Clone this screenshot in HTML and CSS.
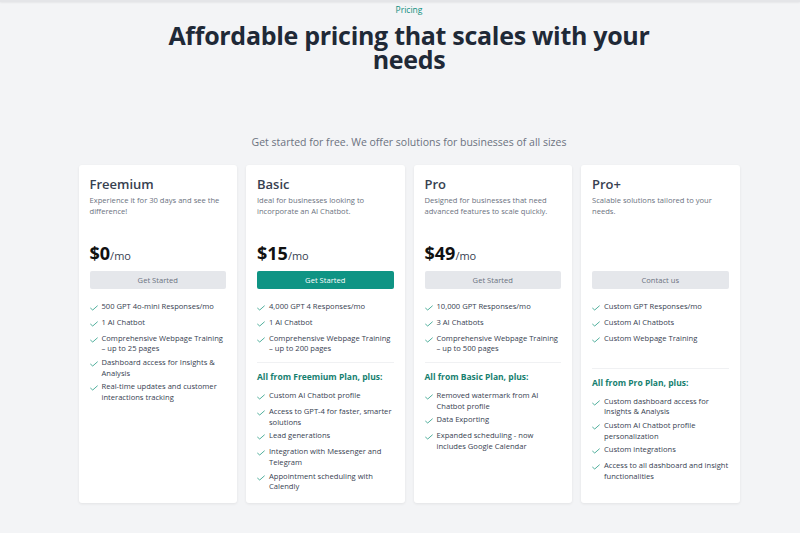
FILE: index.html
```html
<!DOCTYPE html>
<html lang="en">
<head>
<meta charset="utf-8">
<title>Pricing</title>
<link rel="stylesheet" href="styles.css">
</head>
<body>
<div class="topbar"></div>
<main class="page">
  <header class="intro">
    <p class="eyebrow">Pricing</p>
    <h1 class="title"><span class="title-line">Affordable pricing that scales with your</span><span class="title-line">needs</span></h1>
    <p class="subtitle">Get started for free. We offer solutions for businesses of all sizes</p>
  </header>

  <section class="plans">
    <article class="card">
      <div class="head">
        <h2 class="name">Freemium</h2>
        <p class="desc">Experience it for 30 days and see the difference!</p>
      </div>
      <div class="price"><span class="amount">$0</span><span class="per">/mo</span></div>
      <button class="btn">Get Started</button>
      <ul class="features">
        <li><svg class="check" viewBox="0 0 10 7"><path d="M0.8 3.8 L3.4 6 L9.2 0.9"/></svg><span>500 GPT 4o-mini Responses/mo</span></li>
        <li><svg class="check" viewBox="0 0 10 7"><path d="M0.8 3.8 L3.4 6 L9.2 0.9"/></svg><span>1 AI Chatbot</span></li>
        <li><svg class="check" viewBox="0 0 10 7"><path d="M0.8 3.8 L3.4 6 L9.2 0.9"/></svg><span>Comprehensive Webpage Training – up to 25 pages</span></li>
        <li><svg class="check" viewBox="0 0 10 7"><path d="M0.8 3.8 L3.4 6 L9.2 0.9"/></svg><span>Dashboard access for Insights &amp; Analysis</span></li>
        <li><svg class="check" viewBox="0 0 10 7"><path d="M0.8 3.8 L3.4 6 L9.2 0.9"/></svg><span>Real-time updates and customer interactions tracking</span></li>
      </ul>
    </article>

    <article class="card">
      <div class="head">
        <h2 class="name">Basic</h2>
        <p class="desc">Ideal for businesses looking to incorporate an AI Chatbot.</p>
      </div>
      <div class="price"><span class="amount">$15</span><span class="per">/mo</span></div>
      <button class="btn btn-primary">Get Started</button>
      <ul class="features">
        <li><svg class="check" viewBox="0 0 10 7"><path d="M0.8 3.8 L3.4 6 L9.2 0.9"/></svg><span>4,000 GPT 4 Responses/mo</span></li>
        <li><svg class="check" viewBox="0 0 10 7"><path d="M0.8 3.8 L3.4 6 L9.2 0.9"/></svg><span>1 AI Chatbot</span></li>
        <li><svg class="check" viewBox="0 0 10 7"><path d="M0.8 3.8 L3.4 6 L9.2 0.9"/></svg><span>Comprehensive Webpage Training – up to 200 pages</span></li>
      </ul>
      <hr class="divider">
      <h3 class="plus">All from Freemium Plan, plus:</h3>
      <ul class="features extra">
        <li><svg class="check" viewBox="0 0 10 7"><path d="M0.8 3.8 L3.4 6 L9.2 0.9"/></svg><span>Custom AI Chatbot profile</span></li>
        <li><svg class="check" viewBox="0 0 10 7"><path d="M0.8 3.8 L3.4 6 L9.2 0.9"/></svg><span>Access to GPT-4 for faster, smarter solutions</span></li>
        <li><svg class="check" viewBox="0 0 10 7"><path d="M0.8 3.8 L3.4 6 L9.2 0.9"/></svg><span>Lead generations</span></li>
        <li><svg class="check" viewBox="0 0 10 7"><path d="M0.8 3.8 L3.4 6 L9.2 0.9"/></svg><span>Integration with Messenger and Telegram</span></li>
        <li><svg class="check" viewBox="0 0 10 7"><path d="M0.8 3.8 L3.4 6 L9.2 0.9"/></svg><span>Appointment scheduling with Calendly</span></li>
      </ul>
    </article>

    <article class="card">
      <div class="head">
        <h2 class="name">Pro</h2>
        <p class="desc">Designed for businesses that need advanced features to scale quickly.</p>
      </div>
      <div class="price"><span class="amount">$49</span><span class="per">/mo</span></div>
      <button class="btn">Get Started</button>
      <ul class="features">
        <li><svg class="check" viewBox="0 0 10 7"><path d="M0.8 3.8 L3.4 6 L9.2 0.9"/></svg><span>10,000 GPT Responses/mo</span></li>
        <li><svg class="check" viewBox="0 0 10 7"><path d="M0.8 3.8 L3.4 6 L9.2 0.9"/></svg><span>3 AI Chatbots</span></li>
        <li><svg class="check" viewBox="0 0 10 7"><path d="M0.8 3.8 L3.4 6 L9.2 0.9"/></svg><span>Comprehensive Webpage Training – up to 500 pages</span></li>
      </ul>
      <hr class="divider">
      <h3 class="plus">All from Basic Plan, plus:</h3>
      <ul class="features extra">
        <li><svg class="check" viewBox="0 0 10 7"><path d="M0.8 3.8 L3.4 6 L9.2 0.9"/></svg><span>Removed watermark from AI Chatbot profile</span></li>
        <li><svg class="check" viewBox="0 0 10 7"><path d="M0.8 3.8 L3.4 6 L9.2 0.9"/></svg><span>Data Exporting</span></li>
        <li><svg class="check" viewBox="0 0 10 7"><path d="M0.8 3.8 L3.4 6 L9.2 0.9"/></svg><span>Expanded scheduling - now includes Google Calendar</span></li>
      </ul>
    </article>

    <article class="card">
      <div class="head">
        <h2 class="name">Pro+</h2>
        <p class="desc">Scalable solutions tailored to your needs.</p>
      </div>
      <div class="price"></div>
      <button class="btn">Contact us</button>
      <ul class="features">
        <li><svg class="check" viewBox="0 0 10 7"><path d="M0.8 3.8 L3.4 6 L9.2 0.9"/></svg><span>Custom GPT Responses/mo</span></li>
        <li><svg class="check" viewBox="0 0 10 7"><path d="M0.8 3.8 L3.4 6 L9.2 0.9"/></svg><span>Custom AI Chatbots</span></li>
        <li><svg class="check" viewBox="0 0 10 7"><path d="M0.8 3.8 L3.4 6 L9.2 0.9"/></svg><span>Custom Webpage Training</span></li>
      </ul>
      <hr class="divider divider-low">
      <h3 class="plus">All from Pro Plan, plus:</h3>
      <ul class="features extra">
        <li><svg class="check" viewBox="0 0 10 7"><path d="M0.8 3.8 L3.4 6 L9.2 0.9"/></svg><span>Custom dashboard access for Insights &amp; Analysis</span></li>
        <li><svg class="check" viewBox="0 0 10 7"><path d="M0.8 3.8 L3.4 6 L9.2 0.9"/></svg><span>Custom AI Chatbot profile personalization</span></li>
        <li><svg class="check" viewBox="0 0 10 7"><path d="M0.8 3.8 L3.4 6 L9.2 0.9"/></svg><span>Custom integrations</span></li>
        <li><svg class="check" viewBox="0 0 10 7"><path d="M0.8 3.8 L3.4 6 L9.2 0.9"/></svg><span>Access to all dashboard and insight functionalities</span></li>
      </ul>
    </article>
  </section>
</main>
</body>
</html>
```

FILE: styles.css
```css
* { box-sizing: border-box; }

html, body {
  margin: 0;
  padding: 0;
}

body {
  background: #f3f4f6;
  font-family: "Open Sans", "Noto Sans", sans-serif;
  color: #374151;
  height: 533px;
  overflow: hidden;
}

.topbar {
  height: 2px;
  background: #e4e5e8;
  box-shadow: 0 1px 2px rgba(0, 0, 0, 0.06);
}

.page {
  padding-left: 18px;
}

.intro {
  text-align: center;
}

.eyebrow {
  margin: 2px 0 0;
  font-size: 8.5px;
  line-height: 12px;
  color: #0f8f80;
}

.title {
  margin: 7px 0 0;
  font-size: 25px;
  font-weight: 700;
  color: #1f2937;
  letter-spacing: -0.3px;
  display: flex;
  flex-direction: column;
  align-items: center;
}

.title-line {
  display: block;
  height: 24px;
  line-height: 24px;
}

.subtitle {
  margin: 64px 0 0;
  font-size: 10.5px;
  line-height: 14px;
  color: #6b7280;
}

.plans {
  width: 661px;
  margin: 16px auto 0;
  display: grid;
  grid-template-columns: repeat(4, 1fr);
  gap: 9px;
}

.card {
  background: #fff;
  border-radius: 3px;
  box-shadow: 0 1px 3px rgba(0, 0, 0, 0.07);
  padding: 11px 11px 0;
  height: 338px;
  display: flex;
  flex-direction: column;
}

.head {
  height: 66px;
}

.name {
  margin: 0;
  font-size: 13px;
  line-height: 16px;
  font-weight: 600;
  color: #374151;
}

.desc {
  margin: 3px 0 0;
  font-size: 7.6px;
  line-height: 11px;
  color: #6b7280;
}

.price {
  height: 22px;
  display: flex;
  align-items: baseline;
  line-height: 22px;
}

.amount {
  font-size: 18px;
  font-weight: 700;
  color: #111;
}

.per {
  font-size: 11px;
  color: #374151;
}

.btn {
  margin-top: 7px;
  height: 18px;
  width: 100%;
  border: 0;
  border-radius: 2px;
  background: #e5e7eb;
  color: #6b7280;
  font-family: inherit;
  font-size: 7.6px;
  padding: 0;
}

.btn-primary {
  background: #0f9484;
  color: #fff;
}

.features {
  list-style: none;
  margin: 11.5px 0 0;
  padding: 0;
  display: flex;
  flex-direction: column;
  gap: 3px;
}

.features li {
  display: flex;
  align-items: flex-start;
  gap: 4px;
  min-height: 13px;
  font-size: 7.6px;
  line-height: 10.7px;
  color: #374151;
}

.check {
  flex: 0 0 auto;
  width: 8px;
  height: 6px;
  margin-top: 4px;
  fill: none;
  stroke: #3aa590;
  stroke-width: 1.1;
  stroke-linecap: round;
  stroke-linejoin: round;
}

.divider {
  border: 0;
  border-top: 1px solid #f0f1f3;
  margin: 8px 0 0;
  width: 100%;
}

.divider-low {
  margin-top: 22px;
}

.plus {
  margin: 8px 0 0;
  font-size: 8.5px;
  line-height: 12px;
  font-weight: 700;
  color: #16806f;
}

.features.extra {
  margin-top: 7px;
}
```
